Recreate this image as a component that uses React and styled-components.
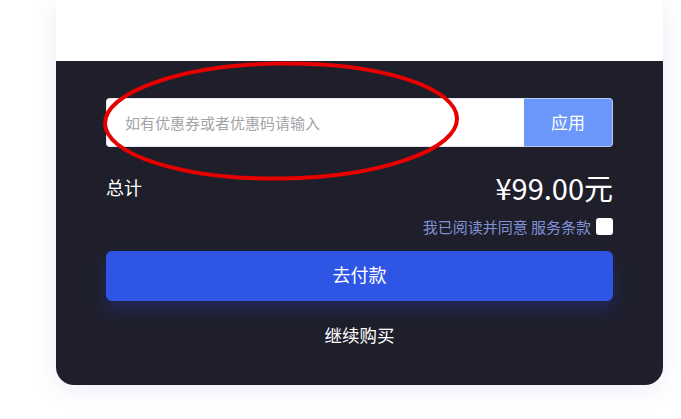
import React from "react";
import styled, { createGlobalStyle } from "styled-components";

const Global = createGlobalStyle`
  html, body { margin: 0; padding: 0; background: #ffffff; }
  body { font-family: "Noto Sans CJK SC", "Noto Sans", sans-serif; }
  * { box-sizing: border-box; }
`;

const Page = styled.div`
  position: relative;
  width: 681px;
  height: 419px;
  overflow: hidden;
  background: #ffffff;
  padding: 0 18px 0 56px;
`;

const Card = styled.div`
  width: 607px;
  border-radius: 0 0 18px 18px;
  box-shadow: 0 4px 24px rgba(90, 110, 190, 0.12);
  overflow: hidden;
`;

const TopArea = styled.div`
  height: 61px;
  background: #ffffff;
`;

const Dark = styled.div`
  background: #1f1f2c;
  padding: 37px 50px 38px;
  display: flex;
  flex-direction: column;
`;

const CouponRow = styled.div`
  display: flex;
  height: 49px;
`;

const CouponInput = styled.input`
  flex: 1;
  min-width: 0;
  height: 100%;
  border: 1px solid #e3e6ee;
  border-right: none;
  border-radius: 4px 0 0 4px;
  background: #ffffff;
  padding: 0 18px;
  font-family: inherit;
  font-size: 15px;
  color: #333;
  outline: none;
  &::placeholder { color: #a3a3a8; }
`;

const ApplyButton = styled.button`
  width: 89px;
  height: 100%;
  border: 1px solid #b9c9f3;
  border-left: none;
  border-radius: 0 4px 4px 0;
  background: #6b97fb;
  color: #ffffff;
  font-family: inherit;
  font-size: 17px;
  padding: 0 0 3px;
  cursor: pointer;
`;

const TotalRow = styled.div`
  margin-top: 22px;
  height: 36px;
  display: flex;
  align-items: center;
  justify-content: space-between;
  color: #ffffff;
`;

const TotalLabel = styled.span`
  font-size: 18px;
`;

const Price = styled.span`
  font-size: 29px;
`;

const AgreeRow = styled.label`
  margin-top: 11px;
  height: 20px;
  display: flex;
  align-items: center;
  justify-content: flex-end;
  gap: 5px;
  color: #8191d6;
  font-size: 15px;
`;

const Check = styled.span`
  width: 17px;
  height: 17px;
  border-radius: 3px;
  background: #ffffff;
`;

const PayButton = styled.button`
  margin-top: 15px;
  height: 50px;
  border: none;
  border-radius: 6px;
  background: #2f55e5;
  color: #ffffff;
  font-family: inherit;
  font-size: 18px;
  padding: 0 0 4px;
  box-shadow: 0 8px 16px rgba(40, 70, 210, 0.28);
  cursor: pointer;
`;

const ContinueLink = styled.div`
  margin-top: 22px;
  height: 24px;
  line-height: 24px;
  text-align: center;
  color: #ffffff;
  font-size: 17.5px;
`;

const Annotation = styled.svg`
  position: absolute;
  left: 100px;
  top: 59px;
  pointer-events: none;
`;

export default function App() {
  return (
    <>
      <Global />
      <Page>
        <Card>
          <TopArea />
          <Dark>
            <CouponRow>
              <CouponInput placeholder="如有优惠券或者优惠码请输入" />
              <ApplyButton>应用</ApplyButton>
            </CouponRow>
            <TotalRow>
              <TotalLabel>总计</TotalLabel>
              <Price>¥99.00元</Price>
            </TotalRow>
            <AgreeRow>
              <span>我已阅读并同意 服务条款</span>
              <Check />
            </AgreeRow>
            <PayButton>去付款</PayButton>
            <ContinueLink>继续购买</ContinueLink>
          </Dark>
        </Card>
        <Annotation width="362" height="126" viewBox="0 0 362 126">
          <ellipse cx="181" cy="62" rx="176" ry="57.5" fill="none" stroke="#e60000" strokeWidth="4" transform="rotate(-0.8 181 62)" />
        </Annotation>
      </Page>
    </>
  );
}
